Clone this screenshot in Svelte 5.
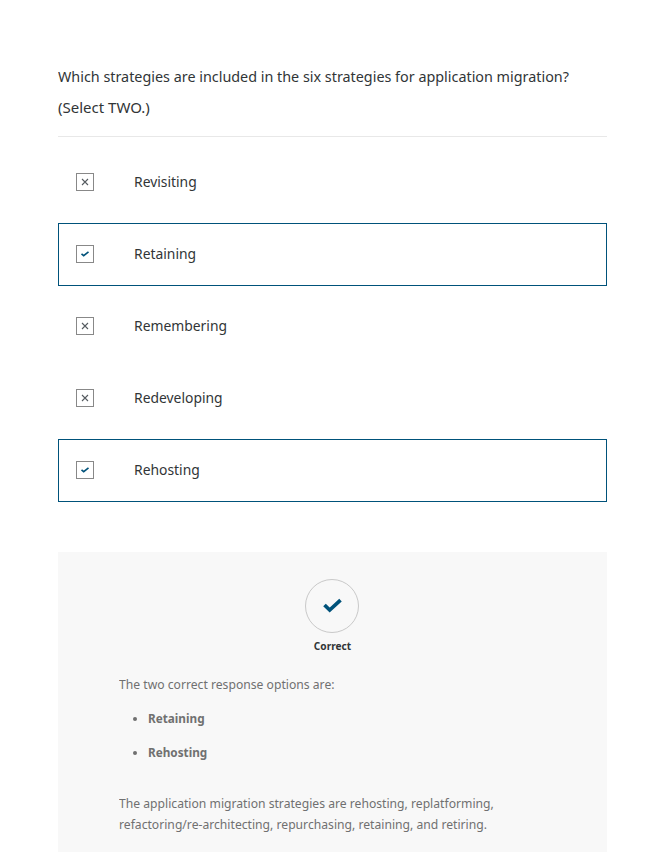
<script>
  const options = [
    { label: 'Revisiting', correct: false },
    { label: 'Retaining', correct: true },
    { label: 'Remembering', correct: false },
    { label: 'Redeveloping', correct: false },
    { label: 'Rehosting', correct: true }
  ];
</script>

<main>
  <h1><span class="question">Which strategies are included in the six strategies for application migration?</span><br />(Select TWO.)</h1>

  <div class="options">
    {#each options as option}
      <div class="option" class:correct={option.correct}>
        <span class="box">
          <svg width="16" height="16" viewBox="0 0 16 16" fill="none">
            {#if option.correct}
              <path d="M4.5 7.8 L6.7 9.7 L11.5 5.8" stroke="#00527a" stroke-width="1.6" />
            {:else}
              <path d="M5 5 L11 11 M11 5 L5 11" stroke="#555b60" stroke-width="1.1" />
            {/if}
          </svg>
        </span>
        <span class="label">{option.label}</span>
      </div>
    {/each}
  </div>

  <section class="feedback">
    <div class="badge">
      <svg width="20" height="16" viewBox="0 0 20 16" fill="none">
        <path d="M2.5 7 L7.7 12 L18.5 2.2" stroke="#00527a" stroke-width="3.7" />
      </svg>
    </div>
    <div class="status">Correct</div>
    <div class="explanation">
      <p>The two correct response options are:</p>
      <ul>
        <li><strong>Retaining</strong></li>
        <li><strong>Rehosting</strong></li>
      </ul>
      <p>The application migration strategies are rehosting, replatforming,<br />refactoring/re-architecting, repurchasing, retaining, and retiring.</p>
    </div>
  </section>
</main>

<style>
  :global(body) { margin: 0; background: #fff; }
  main {
    box-sizing: border-box;
    width: 664px;
    height: 852px;
    overflow: hidden;
    padding: 61px 57px 0 58px;
    font-family: "Noto Sans", "Open Sans", sans-serif;
    color: #313537;
  }
  h1 {
    margin: 0;
    padding-bottom: 13px;
    border-bottom: 1px solid #e8e8e8;
    font-size: 15px;
    font-weight: 400;
    line-height: 31px;
    white-space: nowrap;
  }
  .question, .label, strong {
    display: inline-block;
    transform-origin: left center;
  }
  .question { transform: scaleX(0.957); }
  .options {
    display: flex;
    flex-direction: column;
    gap: 9px;
    padding-top: 14px;
  }
  .option {
    box-sizing: border-box;
    height: 63px;
    display: flex;
    align-items: center;
    gap: 40.4px;
    padding: 0 0 2px 17px;
    border: 1px solid transparent;
    font-size: 15px;
  }
  .option.correct { border-color: #00527a; }
  .box {
    display: flex;
    width: 16px;
    height: 16px;
    border: 1px solid #888;
  }
  .label {
    line-height: 24px;
    padding-bottom: 1px;
    transform: scaleX(0.925);
  }
  .feedback {
    height: 300px;
    margin-top: 50px;
    padding-top: 27px;
    box-sizing: border-box;
    background: #f8f8f8;
  }
  .badge {
    box-sizing: border-box;
    width: 54px;
    height: 54px;
    margin: 0 0 0 247px;
    border: 1px solid #c9c9c9;
    border-radius: 50%;
    display: flex;
    align-items: center;
    justify-content: center;
  }
  .status {
    margin-top: 3px;
    line-height: 20px;
    font-size: 11px;
    font-weight: 700;
    text-align: center;
    transform: scaleX(0.92);
  }
  .explanation {
    padding: 18px 0 0 61px;
    color: #707070;
    font-size: 13px;
    line-height: 21px;
    white-space: nowrap;
  }
  p {
    margin: 0;
    transform: scaleX(0.935);
    transform-origin: left center;
  }
  ul {
    margin: 13px 0 30px;
    padding-left: 29px;
    font-size: 12.5px;
  }
  li + li { margin-top: 13px; }
  strong { transform: scaleX(0.94); }
</style>
